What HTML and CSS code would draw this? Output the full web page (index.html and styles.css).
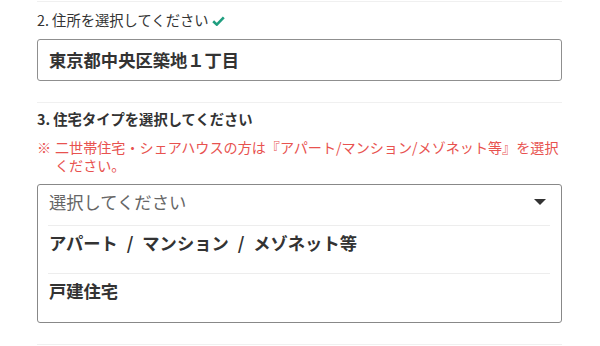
FILE: index.html
```html
<!DOCTYPE html>
<html lang="ja">
<head>
<meta charset="utf-8">
<link rel="stylesheet" href="styles.css">
</head>
<body>
<div class="form">
  <section class="field">
    <div class="label">2. 住所を選択してください<svg class="check" width="13" height="10" viewBox="0 0 13 10"><path d="M1.2 5.2 L4.8 8.6 L11.8 1.4" fill="none" stroke="#1f9e7f" stroke-width="2.6"/></svg></div>
    <div class="input">東京都中央区築地１丁目</div>
  </section>
  <section class="field">
    <div class="label bold">3. 住宅タイプを選択してください</div>
    <div class="note"><span class="mark">※</span><span class="note-text">二世帯住宅・シェアハウスの方は『アパート/マンション/メゾネット等』を選択ください。</span></div>
    <div class="select">
      <div class="placeholder"><span>選択してください</span><span class="arrow"></span></div>
      <div class="options">
        <div class="option">アパート / マンション / メゾネット等</div>
        <div class="option">戸建住宅</div>
      </div>
    </div>
  </section>
  <section class="field last"></section>
</div>
</body>
</html>
```

FILE: styles.css
```css
html, body {
  margin: 0;
  padding: 0;
  background: #fff;
}
body {
  font-family: "Noto Sans CJK JP", "Noto Sans", sans-serif;
  color: #333;
  width: 600px;
  height: 346px;
  overflow: hidden;
}
.form {
  margin: 1px 0 0 37px;
  width: 525px;
}
.field {
  border-top: 1px solid #f0f0f0;
  padding: 8px 0 21px;
}
.field + .field {
  padding-top: 6px;
}
.field.last {
  padding: 0;
}
.label {
  font-size: 14.3px;
  line-height: 20px;
  display: flex;
  align-items: center;
  color: #333;
}
.label.bold {
  font-weight: bold;
}
.check {
  margin-left: 3px;
  margin-top: 1px;
}
.input {
  margin-top: 9px;
  height: 40px;
  border: 1px solid #8f8f8f;
  border-radius: 3px;
  padding-left: 11px;
  font-size: 17.3px;
  font-weight: bold;
  line-height: 39px;
  color: #333;
}
.note {
  margin-top: 9px;
  display: flex;
  font-size: 14.1px;
  line-height: 18px;
  color: #e8524f;
}
.mark {
  flex: none;
  width: 18px;
}
.select {
  margin-top: 10px;
  border: 1px solid #888;
  border-radius: 3px;
}
.placeholder {
  height: 40px;
  box-sizing: border-box;
  padding: 5px 15px 0 11px;
  display: flex;
  justify-content: space-between;
  align-items: flex-start;
  font-size: 17.3px;
  line-height: 24px;
  color: #666;
}
.arrow {
  margin-top: 9px;
  width: 0;
  height: 0;
  border-left: 6px solid transparent;
  border-right: 6px solid transparent;
  border-top: 6px solid #333;
}
.options {
  padding: 0 11px 0 10px;
}
.option {
  border-top: 1px solid #ededed;
  padding: 5px 0 18px 1px;
  font-size: 17.3px;
  line-height: 24px;
  font-weight: bold;
  word-spacing: 5px;
  color: #333;
}
.option + .option {
  padding-bottom: 19px;
}
```
